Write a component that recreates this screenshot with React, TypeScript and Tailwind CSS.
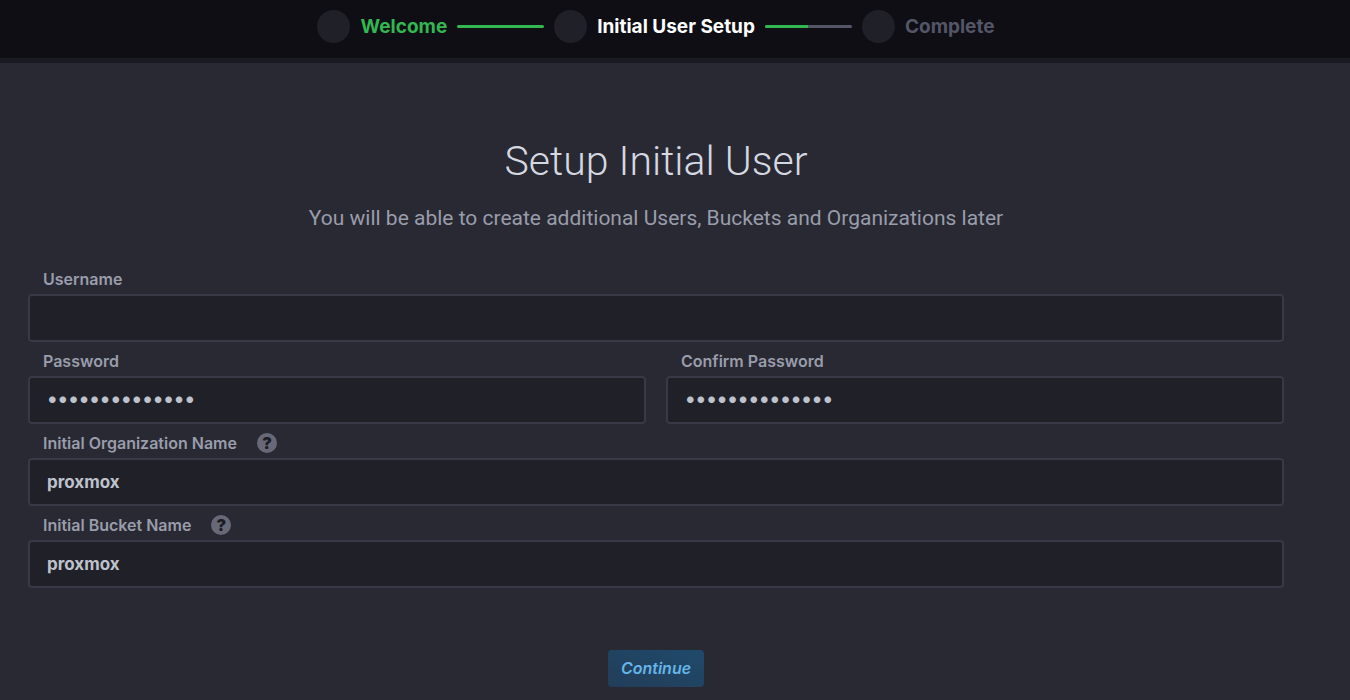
import { useState } from 'react';
import type { ReactNode } from 'react';

function Step({ label, tone }: { label: string; tone: string }) {
  return (
    <li className="flex items-center gap-[10px]">
      <span className="size-[33px] rounded-full bg-[#202028]" />
      <span className={`text-[19px] leading-7 font-bold whitespace-nowrap ${tone}`}>{label}</span>
    </li>
  );
}

function Connector({ half = false }: { half?: boolean }) {
  return (
    <li aria-hidden="true" className="flex h-[3px] w-[87px] overflow-hidden rounded-xs bg-[#545667]">
      <span className={half ? 'w-1/2 bg-[#32b751]' : 'w-full bg-[#32b751]'} />
    </li>
  );
}

function HelpIcon({ title }: { title: string }) {
  return (
    <button
      type="button"
      aria-label={title}
      className="flex size-5 items-center justify-center rounded-full bg-[#676978] text-base leading-5 font-black text-[#1c1c24]"
    >
      ?
    </button>
  );
}

type FieldProps = {
  id: string;
  label: string;
  type?: 'text' | 'password';
  initial?: string;
  help?: ReactNode;
};

function Field({ id, label, type = 'text', initial = '', help }: FieldProps) {
  const [value, setValue] = useState(initial);
  const textSize = type === 'password' ? 'text-[21px] font-semibold pb-1' : 'text-[17px] font-bold';
  return (
    <div className="min-w-0 flex-1">
      <div className="flex h-[34px] items-center gap-5 px-[15px] pt-[3px]">
        <label htmlFor={id} className="text-base leading-5 font-semibold text-[#999dab]">
          {label}
        </label>
        {help}
      </div>
      <input
        id={id}
        type={type}
        value={value}
        onChange={(e) => setValue(e.target.value)}
        className={`h-12 w-full rounded border-2 border-[#383846] bg-[#202028] px-[17px] text-[#bec2cc] outline-none focus:border-[#22adf6] ${textSize}`}
      />
    </div>
  );
}

export default function App() {
  return (
    <div className="min-h-screen bg-[#292933] font-['Inter',sans-serif]">
      <header className="border-b-[5px] border-[#1a1a22] bg-[#0f0e15] pt-[10px] pr-[38px] pb-[15px]">
        <ol className="flex items-center justify-center gap-[10px]">
          <Step label="Welcome" tone="text-[#32b751]" />
          <Connector />
          <Step label="Initial User Setup" tone="text-white" />
          <Connector half />
          <Step label="Complete" tone="text-[#545667]" />
        </ol>
      </header>
      <main className="flex flex-col items-center pt-[74px] pr-[66px] pl-7">
        <h1 className="font-['Roboto',sans-serif] text-[41px] leading-[48px] font-light text-[#d5d8e0]">
          Setup Initial User
        </h1>
        <p className="mt-[19px] font-['Roboto',sans-serif] text-[21px] leading-7 text-[#999dab]">
          You will be able to create additional Users, Buckets and Organizations later
        </p>
        <form className="mt-7 flex w-full flex-col items-center" onSubmit={(e) => e.preventDefault()}>
          <div className="flex w-full flex-col">
            <Field id="username" label="Username" />
            <div className="flex gap-5">
              <Field id="password" label="Password" type="password" initial="abcdefghijklmn" />
              <Field id="confirm" label="Confirm Password" type="password" initial="abcdefghijklmn" />
            </div>
            <Field
              id="org"
              label="Initial Organization Name"
              initial="proxmox"
              help={<HelpIcon title="About organizations" />}
            />
            <Field
              id="bucket"
              label="Initial Bucket Name"
              initial="proxmox"
              help={<HelpIcon title="About buckets" />}
            />
          </div>
          <button
            type="submit"
            className="mt-[62px] h-[37px] w-24 rounded bg-linear-to-tr from-[#223d59] to-[#1f4a6b] pb-0.5 text-base font-semibold text-[#66b5e8] italic"
          >
            Continue
          </button>
        </form>
      </main>
    </div>
  );
}
